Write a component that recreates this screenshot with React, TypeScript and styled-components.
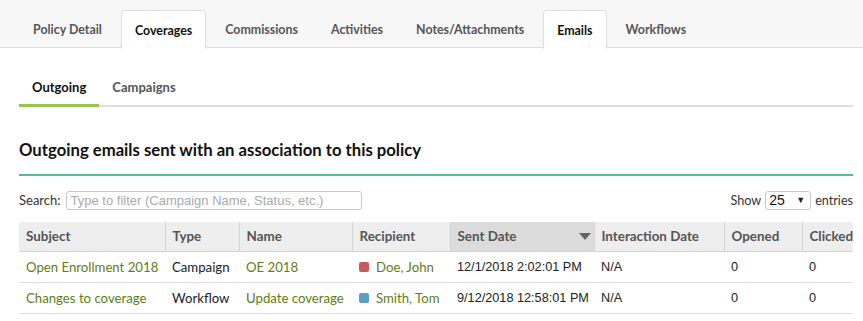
import React from "react";
import styled, { createGlobalStyle } from "styled-components";

const Global = createGlobalStyle`
  html, body { margin: 0; padding: 0; background: #fff; }
  body { font-family: Lato, "Noto Sans", sans-serif; color: #222; }
  * { box-sizing: border-box; }
`;

const Page = styled.div`
  width: 863px;
  height: 321px;
  overflow: hidden;
`;

const TabBar = styled.div`
  display: flex;
  gap: 5px;
  height: 48px;
  padding: 10px 0 0 19px;
  background: #f7f7f7;
  border-bottom: 1px solid #dedede;
`;

const Tab = styled.div<{ $active?: boolean }>`
  display: flex;
  align-items: center;
  height: ${(p) => (p.$active ? "39px" : "38px")};
  padding: 0 13px;
  font-size: 12.4px;
  font-weight: 700;
  color: ${(p) => (p.$active ? "#111" : "#555")};
  background: ${(p) => (p.$active ? "#fff" : "transparent")};
  border: 1px solid ${(p) => (p.$active ? "#dedede" : "transparent")};
  border-bottom: none;
  border-radius: 4px 4px 0 0;
  margin-bottom: -1px;
`;

const Content = styled.div`
  padding: 0 10px 0 19px;
`;

const SubTabs = styled.div`
  display: flex;
  margin-top: 21px;
  border-bottom: 2px solid #dedede;
`;

const SubTab = styled.div<{ $active?: boolean }>`
  display: flex;
  align-items: center;
  height: 38px;
  padding: 0 13px;
  font-size: 13px;
  font-weight: 700;
  color: ${(p) => (p.$active ? "#111" : "#555")};
  border-bottom: 3px solid ${(p) => (p.$active ? "#9bc34f" : "transparent")};
  margin-bottom: -2px;
`;

const Heading = styled.h2`
  margin: 32px 0 0;
  font-size: 16.7px;
  font-weight: 700;
  color: #111;
  line-height: 22px;
  padding-bottom: 13px;
  border-bottom: 2px solid #4cbf9c;
`;

const Controls = styled.div`
  display: flex;
  align-items: center;
  justify-content: space-between;
  margin-top: 14px;
  height: 20px;
  font-size: 13px;
  color: #333;
`;

const Label = styled.label`
  display: flex;
  align-items: center;
  gap: 5px;
`;

const ShowLabel = styled(Label)`
  gap: 4px;
  font-size: 12.6px;
`;

const SearchInput = styled.input`
  width: 296px;
  height: 19px;
  border: 1px solid #c8c8c8;
  border-radius: 3px;
  padding: 0 4px;
  font-family: "Liberation Sans", Arial, sans-serif;
  font-size: 13px;
  color: #333;
  &::placeholder { color: #aaa; }
`;

const SelectBox = styled.div`
  display: flex;
  align-items: center;
  justify-content: space-between;
  width: 46px;
  height: 19px;
  border: 1px solid #c8c8c8;
  border-radius: 3px;
  padding: 0 5px 0 3px;
  font-family: "Liberation Sans", Arial, sans-serif;
  font-size: 14px;
  color: #111;
`;

const Caret = styled.span`
  font-size: 9px;
  color: #222;
`;

const TableWrap = styled.div`
  margin-top: 12px;
  overflow: hidden;
  width: 834px;
`;

const Table = styled.table`
  border-collapse: collapse;
  table-layout: fixed;
  width: 950px;
  font-size: 13px;
`;

const Th = styled.th<{ $sorted?: boolean }>`
  position: relative;
  height: 29px;
  padding: 0 7px;
  text-align: left;
  font-weight: 700;
  font-size: 13.4px;
  color: #555;
  background: ${(p) => (p.$sorted ? "#dcdcdc" : "#eeeeee")};
  border-left: 1px solid #d4d4d4;
  border-bottom: 1px solid #d4d4d4;
  &:first-child { border-left: none; }
`;

const SortArrow = styled.span`
  position: absolute;
  right: 3px;
  top: 11px;
  width: 0;
  height: 0;
  border-left: 6px solid transparent;
  border-right: 6px solid transparent;
  border-top: 7px solid #666;
`;

const Td = styled.td<{ $link?: boolean; $mono?: boolean }>`
  height: 31px;
  padding: 0 7px;
  border-bottom: 1px solid #dedede;
  white-space: nowrap;
  color: ${(p) => (p.$link ? "#5f7d16" : "#222")};
  font-family: ${(p) => (p.$mono ? '"Liberation Sans", Arial, sans-serif' : "inherit")};
  font-size: ${(p) => (p.$mono ? "12.7px" : "13.2px")};
`;

const Recipient = styled.span`
  display: inline-flex;
  align-items: center;
  gap: 7px;
  color: #5f7d16;
`;

const Swatch = styled.span<{ $color: string }>`
  width: 10px;
  height: 10px;
  border-radius: 2px;
  background: ${(p) => p.$color};
`;

const tabs = ["Policy Detail", "Coverages", "Commissions", "Activities", "Notes/Attachments", "Emails", "Workflows"];
const activeTabs = ["Coverages", "Emails"];

const cols = [
  { label: "Subject", w: 146 },
  { label: "Type", w: 74 },
  { label: "Name", w: 113 },
  { label: "Recipient", w: 98 },
  { label: "Sent Date", w: 144, sorted: true },
  { label: "Interaction Date", w: 130 },
  { label: "Opened", w: 78 },
  { label: "Clicked", w: 167 },
];

const rows = [
  { subject: "Open Enrollment 2018", type: "Campaign", name: "OE 2018", recipient: "Doe, John", color: "#c9585b", sent: "12/1/2018 2:02:01 PM" },
  { subject: "Changes to coverage", type: "Workflow", name: "Update coverage", recipient: "Smith, Tom", color: "#5b9dc6", sent: "9/12/2018 12:58:01 PM" },
];

export default function App() {
  return (
    <Page>
      <Global />
      <TabBar>
        {tabs.map((t) => (
          <Tab key={t} $active={activeTabs.includes(t)}>{t}</Tab>
        ))}
      </TabBar>
      <Content>
        <SubTabs>
          <SubTab $active>Outgoing</SubTab>
          <SubTab>Campaigns</SubTab>
        </SubTabs>
        <Heading>Outgoing emails sent with an association to this policy</Heading>
        <Controls>
          <Label>
            Search:
            <SearchInput placeholder="Type to filter (Campaign Name, Status, etc.)" />
          </Label>
          <ShowLabel>
            Show
            <SelectBox>
              25 <Caret>▼</Caret>
            </SelectBox>
            entries
          </ShowLabel>
        </Controls>
        <TableWrap>
          <Table>
            <colgroup>
              {cols.map((c) => (
                <col key={c.label} style={{ width: c.w }} />
              ))}
            </colgroup>
            <thead>
              <tr>
                {cols.map((c) => (
                  <Th key={c.label} $sorted={c.sorted}>
                    {c.label}
                    {c.sorted && <SortArrow />}
                  </Th>
                ))}
              </tr>
            </thead>
            <tbody>
              {rows.map((r) => (
                <tr key={r.subject}>
                  <Td $link>{r.subject}</Td>
                  <Td>{r.type}</Td>
                  <Td $link>{r.name}</Td>
                  <Td>
                    <Recipient>
                      <Swatch $color={r.color} />
                      {r.recipient}
                    </Recipient>
                  </Td>
                  <Td $mono>{r.sent}</Td>
                  <Td $mono>N/A</Td>
                  <Td $mono>0</Td>
                  <Td $mono>0</Td>
                </tr>
              ))}
            </tbody>
          </Table>
        </TableWrap>
      </Content>
    </Page>
  );
}
